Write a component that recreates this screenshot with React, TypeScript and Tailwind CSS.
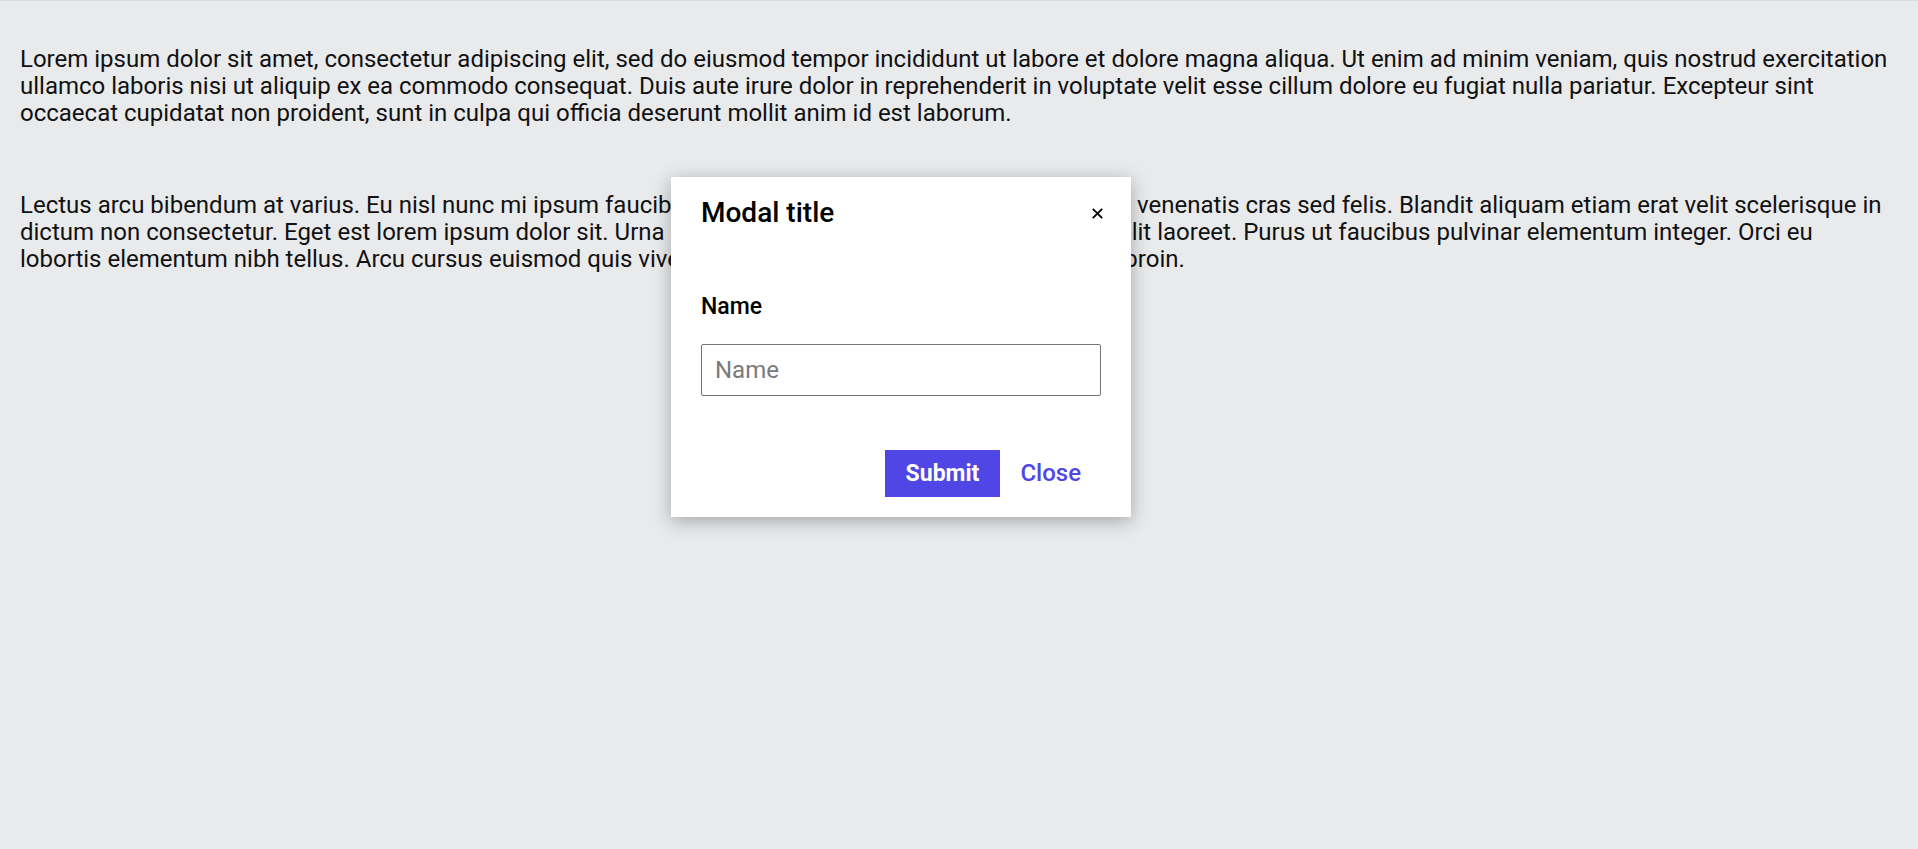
import { useState } from 'react'

const font = { fontFamily: 'Roboto, "Noto Sans", sans-serif' }

export default function App() {
  const [name, setName] = useState('')

  return (
    <div
      className="relative min-h-screen border-t border-[#d9dadd] bg-[#e9eaec] px-5 text-[24px] leading-[27px] text-[#111111]"
      style={font}
    >
      <p className="pt-[45px]">
        Lorem ipsum dolor sit amet, consectetur adipiscing elit, sed do eiusmod tempor incididunt ut labore et dolore
        magna aliqua. Ut enim ad minim veniam, quis nostrud exercitation ullamco laboris nisi ut aliquip ex ea commodo
        consequat. Duis aute irure dolor in reprehenderit in voluptate velit esse cillum dolore eu fugiat nulla pariatur.
        Excepteur sint occaecat cupidatat non proident, sunt in culpa qui officia deserunt mollit anim id est laborum.
      </p>
      <p className="mt-[65px]">
        <span className="block whitespace-nowrap">
          Lectus arcu bibendum at varius. Eu nisl nunc mi ipsum faucibus vitae aliquet nec ullamcorper sit amet. A
          venenatis cras sed felis. Blandit aliquam etiam erat velit scelerisque in
        </span>
        <span className="block whitespace-nowrap">
          dictum non consectetur. Eget est lorem ipsum dolor sit. Urna et pharetra massa massa ultricies mi nisi, elit
          laoreet. Purus ut faucibus pulvinar elementum integer. Orci eu
        </span>
        <span className="block whitespace-nowrap">
          lobortis elementum nibh tellus. Arcu cursus euismod quis viverra nibh cras pulvinar mattis nunc est sed proin.
        </span>
      </p>

      {/* modal */}
      <div className="absolute left-[671px] top-[176px] w-[460px] bg-white px-[30px] pb-5 pt-5 shadow-[0_4px_18px_rgba(0,0,0,0.3)]">
        <div className="flex items-start justify-between">
          <h2 className="text-[28px] font-medium leading-[32px] text-black">Modal title</h2>
          <button className="mr-[-3px] mt-[9px] flex h-[14px] w-[14px] items-center justify-center text-black">
            <svg width="11" height="11" viewBox="0 0 11 11" fill="none" stroke="currentColor" strokeWidth="1.9">
              <path d="M0.8 0.8 L10.2 10.2 M10.2 0.8 L0.8 10.2" />
            </svg>
          </button>
        </div>

        <label className="mt-[64px] block text-[23px] font-medium leading-[28px] text-black">Name</label>
        <input
          value={name}
          onChange={(e) => setName(e.target.value)}
          placeholder="Name"
          className="mt-[23px] block h-[52px] w-full rounded-[2px] border border-[#767676] bg-white px-[13px] text-[24px] text-black outline-none placeholder:text-[#7a7a7a]"
        />

        <div className="mt-[54px] flex justify-end">
          <button className="h-[47px] bg-[#4f46e5] px-[21px] text-[23px] font-bold text-white">Submit</button>
          <button className="h-[47px] px-5 text-[24px] font-medium text-[#4f46e5]">Close</button>
        </div>
      </div>
    </div>
  )
}
